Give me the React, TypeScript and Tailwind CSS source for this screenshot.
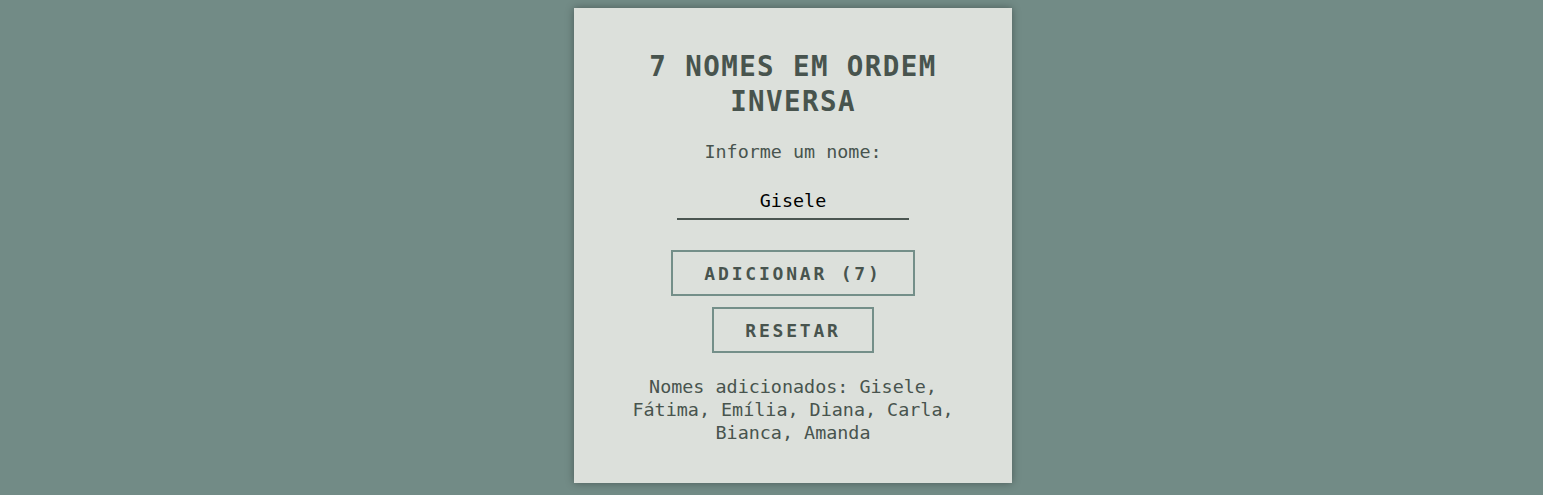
import { useState } from 'react';

const mono = "font-['DejaVu_Sans_Mono','Liberation_Mono',monospace]";

export default function App() {
  const [nome, setNome] = useState('Gisele');
  const [nomes, setNomes] = useState<string[]>(['Gisele', 'Fátima', 'Emília', 'Diana', 'Carla', 'Bianca', 'Amanda']);

  const adicionar = () => {
    if (!nome.trim()) return;
    setNomes([nome.trim(), ...nomes]);
  };

  return (
    <div className={`min-h-screen bg-[#728b86] flex justify-center ${mono}`}>
      <div className="mt-[8px] ml-[43px] self-start w-[438px] bg-[#dce0db] shadow-[0_0_8px_rgba(0,0,0,0.35)] flex flex-col items-center pt-[41px] pb-[39px]">
        <h1 className="text-[27.5px] leading-[35px] font-bold tracking-[1.4px] text-[#48544e] text-center">
          7 NOMES EM ORDEM
          <br />
          INVERSA
        </h1>

        <label htmlFor="nome" className="mt-[22px] text-[18.4px] leading-[21px] text-[#48544e]">
          Informe um nome:
        </label>
        <input
          id="nome"
          value={nome}
          onChange={(e) => setNome(e.target.value)}
          className={`mt-[21px] w-[232px] pt-[7px] pb-[7px] text-[18.4px] leading-[21px] text-black text-center bg-transparent border-b-2 border-[#4b5651] outline-none ${mono}`}
        />

        <button
          onClick={adicionar}
          className={`mt-[30px] h-[46px] px-[31px] border-2 border-[#748f89] text-[18px] font-bold tracking-[2.8px] text-[#48544e] ${mono}`}
        >
          {`ADICIONAR (${nomes.length})`}
        </button>
        <button
          onClick={() => setNomes([])}
          className={`mt-[11px] h-[46px] px-[31px] border-2 border-[#748f89] text-[18px] font-bold tracking-[2.8px] text-[#48544e] ${mono}`}
        >
          RESETAR
        </button>

        <p className="mt-[22px] w-[340px] text-center text-[18.4px] leading-[23px] text-[#48544e]">
          {`Nomes adicionados: ${nomes.join(', ')}`}
        </p>
      </div>
    </div>
  );
}
